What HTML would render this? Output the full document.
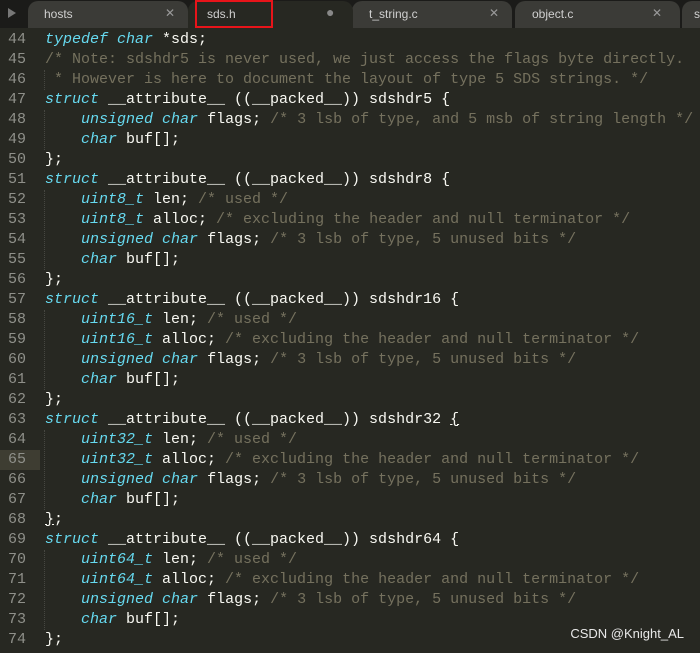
<!DOCTYPE html>
<html><head><meta charset="utf-8"><style>
body{margin:0;width:700px;height:653px;overflow:hidden;background:#272822;position:relative;font-family:"Liberation Mono",monospace}
.bar{position:absolute;left:0;top:0;width:700px;height:28px;background:#1b1b19}
.tab{position:absolute;top:1px;height:27px;background:#3b3b37;border-radius:10px 10px 0 0;font:12px "Liberation Sans",sans-serif;color:#d0d0d0}
.tab span{position:absolute;top:6px}
.tab i{position:absolute;top:5px;font-style:normal;color:#999;font-size:12px}
.act{background:#272822}
.red{position:absolute;left:195px;top:0;width:74px;height:24px;border:2px solid #e8141a}
.code{position:absolute;left:0;top:30px;font-size:15px;line-height:20px;color:#f8f8f2;white-space:pre}
.ln{display:inline-block;width:26px;text-align:right;color:#8f908a;margin-right:19px}
.hl{background:#3e3d32;box-shadow:14px 0 0 #3e3d32}
.k{color:#66d9ef;font-style:italic}
.c{color:#75715e}
.guide{position:absolute;left:44px;border-left:1px dotted #464741}
.wm{position:absolute;right:16px;top:626px;font:13px "Liberation Sans",sans-serif;color:#e8e8e8}
</style></head><body>
<div class="bar"></div>
<div style="position:absolute;left:8px;top:8px;width:0;height:0;border-left:8px solid #777;border-top:5px solid transparent;border-bottom:5px solid transparent"></div>
<div class="tab" style="left:28px;width:160px"><span style="left:16px">hosts</span><i style="left:137px">✕</i></div>
<div class="tab" style="left:352px;width:160px"><span style="left:17px">t_string.c</span><i style="left:137px">✕</i></div>
<div class="tab" style="left:515px;width:165px"><span style="left:17px">object.c</span><i style="left:137px">✕</i></div>
<div class="tab" style="left:682px;width:40px"><span style="left:12px">s</span></div>
<div class="tab act" style="left:188px;width:165px"><span style="left:19px">sds.h</span><i style="left:138px;color:#888;font-size:14px;top:3px">●</i></div>
<div class="red"></div>
<div class="guide" style="top:70px;height:20px"></div>
<div class="guide" style="top:110px;height:40px"></div>
<div class="guide" style="top:190px;height:80px"></div>
<div class="guide" style="top:310px;height:80px"></div>
<div class="guide" style="top:430px;height:80px"></div>
<div class="guide" style="top:550px;height:80px"></div>
<div class="code"><span class="ln">44</span><span class="k">typedef</span> <span class="k">char</span> *sds;
<span class="ln">45</span><span class="c">/* Note: sdshdr5 is never used, we just access the flags byte directly.</span>
<span class="ln">46</span><span class="c"> * However is here to document the layout of type 5 SDS strings. */</span>
<span class="ln">47</span><span class="k">struct</span> __attribute__ ((__packed__)) sdshdr5 {
<span class="ln">48</span>    <span class="k">unsigned</span> <span class="k">char</span> flags; <span class="c">/* 3 lsb of type, and 5 msb of string length */</span>
<span class="ln">49</span>    <span class="k">char</span> buf[];
<span class="ln">50</span>};
<span class="ln">51</span><span class="k">struct</span> __attribute__ ((__packed__)) sdshdr8 {
<span class="ln">52</span>    <span class="k">uint8_t</span> len; <span class="c">/* used */</span>
<span class="ln">53</span>    <span class="k">uint8_t</span> alloc; <span class="c">/* excluding the header and null terminator */</span>
<span class="ln">54</span>    <span class="k">unsigned</span> <span class="k">char</span> flags; <span class="c">/* 3 lsb of type, 5 unused bits */</span>
<span class="ln">55</span>    <span class="k">char</span> buf[];
<span class="ln">56</span>};
<span class="ln">57</span><span class="k">struct</span> __attribute__ ((__packed__)) sdshdr16 {
<span class="ln">58</span>    <span class="k">uint16_t</span> len; <span class="c">/* used */</span>
<span class="ln">59</span>    <span class="k">uint16_t</span> alloc; <span class="c">/* excluding the header and null terminator */</span>
<span class="ln">60</span>    <span class="k">unsigned</span> <span class="k">char</span> flags; <span class="c">/* 3 lsb of type, 5 unused bits */</span>
<span class="ln">61</span>    <span class="k">char</span> buf[];
<span class="ln">62</span>};
<span class="ln">63</span><span class="k">struct</span> __attribute__ ((__packed__)) sdshdr32 <u>{</u>
<span class="ln">64</span>    <span class="k">uint32_t</span> len; <span class="c">/* used */</span>
<span class="ln hl">65</span>    <span class="k">uint32_t</span> alloc; <span class="c">/* excluding the header and null terminator */</span>
<span class="ln">66</span>    <span class="k">unsigned</span> <span class="k">char</span> flags; <span class="c">/* 3 lsb of type, 5 unused bits */</span>
<span class="ln">67</span>    <span class="k">char</span> buf[];
<span class="ln">68</span><u>}</u>;
<span class="ln">69</span><span class="k">struct</span> __attribute__ ((__packed__)) sdshdr64 {
<span class="ln">70</span>    <span class="k">uint64_t</span> len; <span class="c">/* used */</span>
<span class="ln">71</span>    <span class="k">uint64_t</span> alloc; <span class="c">/* excluding the header and null terminator */</span>
<span class="ln">72</span>    <span class="k">unsigned</span> <span class="k">char</span> flags; <span class="c">/* 3 lsb of type, 5 unused bits */</span>
<span class="ln">73</span>    <span class="k">char</span> buf[];
<span class="ln">74</span>};</div>
<div class="wm">CSDN @Knight_AL</div>
</body></html>
